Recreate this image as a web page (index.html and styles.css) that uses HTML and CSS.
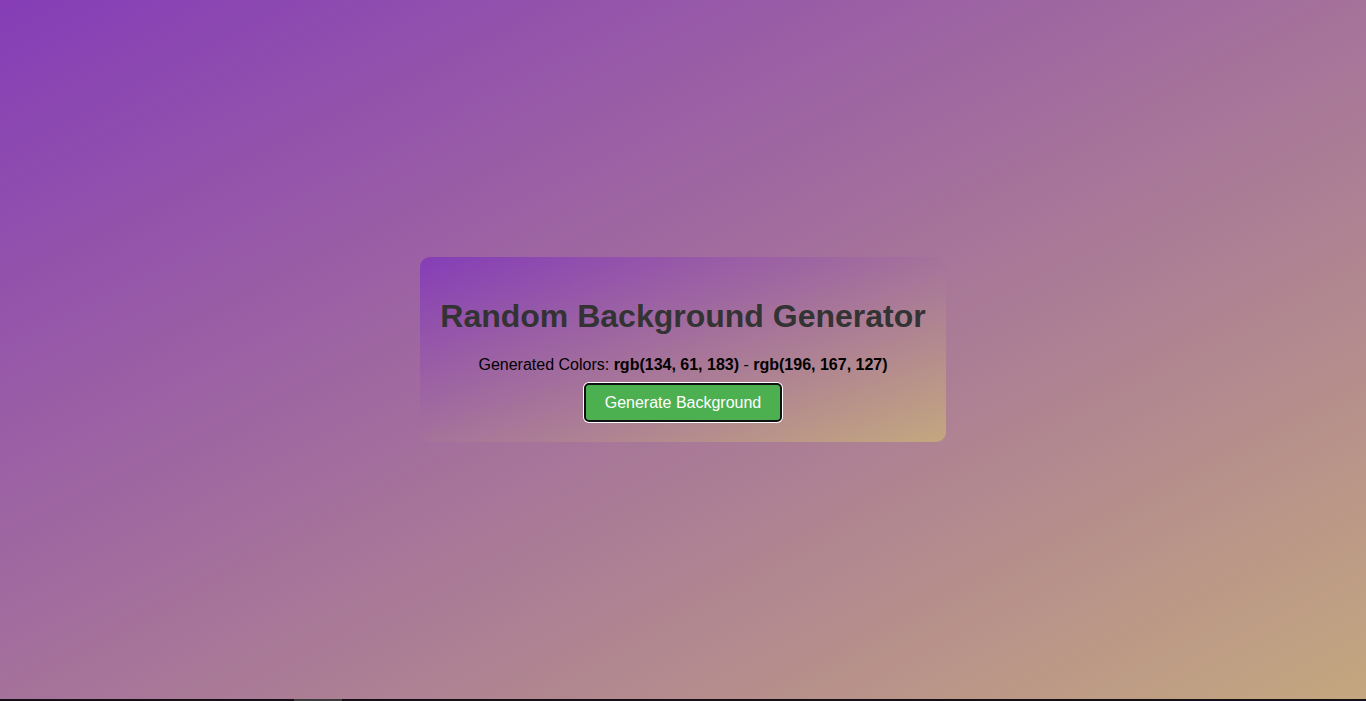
FILE: index.html
```html
<!DOCTYPE html>
<html lang="en">
<head>
<meta charset="utf-8">
<title>Random Background Generator</title>
<link rel="stylesheet" href="styles.css">
</head>
<body>
  <main class="stage">
    <section class="card">
      <h1 class="title">Random Background Generator</h1>
      <p class="colors">Generated Colors: <strong>rgb(134, 61, 183)</strong> - <strong>rgb(196, 167, 127)</strong></p>
      <button class="generate" type="button">Generate Background</button>
    </section>
  </main>
  <div class="bottom-bar"><span class="bar-thumb"></span></div>
</body>
</html>
```

FILE: styles.css
```css
html, body {
  margin: 0;
  padding: 0;
  height: 100%;
}

body {
  display: flex;
  flex-direction: column;
  font-family: "Liberation Sans", Arial, sans-serif;
  background: linear-gradient(to bottom right, rgb(134, 61, 183), rgb(196, 167, 127));
}

.stage {
  flex: 1;
  display: flex;
  align-items: center;
  justify-content: center;
}

.card {
  padding: 20px;
  border-radius: 10px;
  text-align: center;
  background: linear-gradient(to bottom right, rgb(134, 61, 183), rgb(196, 167, 127));
}

.title {
  margin: 21px 0;
  font-size: 32px;
  font-weight: bold;
  color: #333;
}

.colors {
  margin: 10px 0 9px;
  font-size: 16px;
  color: #000;
}

.generate {
  font-family: "Liberation Sans", Arial, sans-serif;
  font-size: 16px;
  color: #fff;
  background: #4caf50;
  border: 2px solid #111;
  border-radius: 5px;
  padding: 8.5px 19px;
  box-shadow: 0 0 0 1px #fff;
  cursor: pointer;
}

.bottom-bar {
  height: 2px;
  background: #150f16;
  display: flex;
}

.bar-thumb {
  margin-left: 294px;
  width: 48px;
  background: #3a3a3a;
}
```
